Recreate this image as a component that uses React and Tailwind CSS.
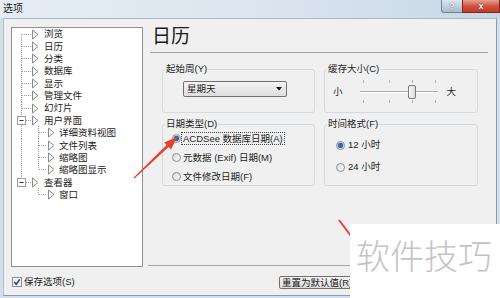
import React from "react"

const tree = [
  { t: "浏览", first: true },
  { t: "日历" },
  { t: "分类" },
  { t: "数据库" },
  { t: "显示" },
  { t: "管理文件" },
  { t: "幻灯片" },
  { t: "用户界面", exp: true },
  { t: "详细资料视图", lvl: 2, root: true },
  { t: "文件列表", lvl: 2, root: true },
  { t: "缩略图", lvl: 2, root: true },
  { t: "缩略图显示", lvl: 2, root: true, last2: true },
  { t: "查看器", exp: true, lastRoot: true },
  { t: "窗口", lvl: 2, last2: true },
]

const dot = { stroke: "#9a9a9a", strokeWidth: 1, strokeDasharray: "1 1" }

const Gutter = ({ item }) => {
  const H = 13
  const m = 6.5
  if (item.lvl === 2) {
    return (
      <svg width="47" height={H} className="block shrink-0">
        {item.root && <line x1="9.5" y1="0" x2="9.5" y2={H} {...dot} />}
        <line x1="26.5" y1="0" x2="26.5" y2={item.last2 ? m : H} {...dot} />
        <line x1="27" y1={m} x2="34" y2={m} {...dot} />
        <polygon points="36.5,2 42,6.5 36.5,11" fill="#f6f6f6" stroke="#8a8a8a" strokeWidth="1" />
      </svg>
    )
  }
  return (
    <svg width="32" height={H} className="block shrink-0">
      {item.exp ? (
        <>
          <line x1="9.5" y1="0" x2="9.5" y2="2.5" {...dot} />
          {!item.lastRoot && <line x1="9.5" y1="10.5" x2="9.5" y2={H} {...dot} />}
          <rect x="5.5" y="2.5" width="8" height="8" fill="#fff" stroke="#9b9b9b" />
          <line x1="7.5" y1={m} x2="11.5" y2={m} stroke="#333" />
          <line x1="14" y1={m} x2="19" y2={m} {...dot} />
        </>
      ) : (
        <>
          <line x1="9.5" y1={item.first ? m : 0} x2="9.5" y2={H} {...dot} />
          <line x1="10" y1={m} x2="19" y2={m} {...dot} />
        </>
      )}
      <polygon points="20.5,2 26,6.5 20.5,11" fill="#f6f6f6" stroke="#8a8a8a" strokeWidth="1" />
    </svg>
  )
}

const Radio = ({ on }) => (
  <svg width="9" height="9" className="block shrink-0">
    <defs>
      <linearGradient id="rg" x1="0" y1="0" x2="1" y2="1">
        <stop offset="0" stopColor="#dcdcdc" />
        <stop offset="1" stopColor="#f8f8f8" />
      </linearGradient>
    </defs>
    <circle cx="4.5" cy="4.5" r="4" fill="url(#rg)" stroke="#8e8e8e" />
    {on && <circle cx="4.5" cy="4.5" r="2.4" fill="#2f6fb0" stroke="#1b4a7e" strokeWidth="0.6" />}
  </svg>
)

const Group = ({ label, className, children }) => (
  <fieldset className={`border border-[#d3dbe1] rounded-[3px] min-w-0 ${className}`}>
    <legend className="ml-[2px] px-[1px] text-[9.5px] leading-[12px]">{label}</legend>
    {children}
  </fieldset>
)

export default function App() {
  return (
    <div className="relative w-[500px] h-[298px] overflow-hidden flex flex-col bg-[#d2deea] text-[#1c1c1c] font-['Liberation_Sans','Noto_Sans_CJK_SC',sans-serif]">
      {/* title bar */}
      <div className="h-[18px] flex items-start justify-between bg-gradient-to-r from-[#e6edf4] via-[#dce6f0] to-[#c8d7e7]">
        <span className="pl-[3px] pt-[3px] text-[10px] leading-[11px]">选项</span>
        <div className="flex">
          <div className="w-[21px] h-[13px] flex items-center justify-center rounded-bl-[3px] border border-t-0 border-r-0 border-[#6f8399] bg-gradient-to-b from-[#dbe5ef] to-[#a8bbd0] text-white text-[9px] font-bold leading-none [text-shadow:0_0_1px_#333]">
            ?
          </div>
          <div className="w-[38px] h-[13px] flex items-center justify-center border border-t-0 border-[#7c2a20] bg-gradient-to-b from-[#e8a196] via-[#cf5140] to-[#c23a27] text-white text-[9px] font-bold leading-none [text-shadow:0_0_1px_#400]">
            x
          </div>
        </div>
      </div>

      {/* body */}
      <div className="flex-1 flex pl-[3px] pr-[3px] pb-[2px]">
        <div className="flex-1 flex flex-col bg-[#f0f0f0] border border-[#8a9bb0] border-l-[#b3c1cf] border-t-[#a9b8c8]">
          <div className="h-[249px] flex">
            {/* tree */}
            <div className="ml-[7px] mt-[8px] w-[132px] h-[240px] bg-white border border-[#8d9299] flex flex-col">
              {tree.map((item) => (
                <div key={item.t} className="h-[12.35px] flex items-center">
                  <Gutter item={item} />
                  <span className="text-[9.5px] leading-none whitespace-nowrap">{item.t}</span>
                </div>
              ))}
            </div>

            {/* right pane */}
            <div className="flex-1 flex flex-col">
              <div className="mt-[8px] pl-[9px] text-[19px] leading-[19px]">日历</div>
              <div className="mt-[6px] ml-[7px] mr-[8px] h-px bg-[#a3a3a3]" />

              <div className="mt-[10px] ml-[19px] grid grid-cols-[153px_154px] gap-x-[9px] gap-y-[5px]">
                <Group label="起始周(Y)" className="h-[50px]">
                  <div className="ml-[20px] mt-[6px] w-[104px] h-[16px] flex items-center justify-between px-[3px] border border-[#707070] rounded-[2px] bg-gradient-to-b from-[#f4f4f4] to-[#dedede]">
                    <span className="text-[9.5px] leading-none">星期天</span>
                    <svg width="6" height="4" className="block mr-[1px]">
                      <polygon points="0,0 6,0 3,3.5" fill="#111" />
                    </svg>
                  </div>
                </Group>

                <Group label="缓存大小(C)" className="h-[50px]">
                  <div className="mt-[5px] h-[24px] flex items-center">
                    <span className="ml-[8px] text-[9.5px] leading-none">小</span>
                    <svg width="82" height="24" className="block ml-[15px]">
                      <defs>
                        <linearGradient id="th" x1="0" y1="0" x2="1" y2="0">
                          <stop offset="0" stopColor="#fbfbfb" />
                          <stop offset="1" stopColor="#d8d8d8" />
                        </linearGradient>
                      </defs>
                      <line x1="2" y1="11.5" x2="80" y2="11.5" stroke="#a9a9a9" />
                      <line x1="2" y1="12.5" x2="80" y2="12.5" stroke="#ffffff" />
                      {[5, 31, 54, 77].map((x) => (
                        <g key={x}>
                          <line x1={x + 0.5} y1="0" x2={x + 0.5} y2="3" stroke="#b5b5b5" />
                          <line x1={x + 0.5} y1="20" x2={x + 0.5} y2="23" stroke="#b5b5b5" />
                        </g>
                      ))}
                      <rect x="50.5" y="5.5" width="7" height="13" rx="1.5" fill="url(#th)" stroke="#7b7b7b" />
                    </svg>
                    <span className="ml-[7px] text-[9.5px] leading-none">大</span>
                  </div>
                </Group>

                <Group label="日期类型(D)" className="h-[68px]">
                  <div className="mt-[-1px] flex flex-col text-[9.5px] leading-none">
                    <div className="h-[19px] flex items-center pl-[9px]">
                      <Radio on />
                      <span className="ml-[1px] px-[1px] py-[1px] outline outline-1 outline-dotted outline-[#444] whitespace-nowrap">
                        ACDSee 数据库日期(A)
                      </span>
                    </div>
                    <div className="h-[19px] flex items-center pl-[9px]">
                      <Radio />
                      <span className="ml-[2px] whitespace-nowrap">元数据 (Exif) 日期(M)</span>
                    </div>
                    <div className="h-[19px] flex items-center pl-[9px]">
                      <Radio />
                      <span className="ml-[2px] whitespace-nowrap">文件修改日期(F)</span>
                    </div>
                  </div>
                </Group>

                <Group label="时间格式(F)" className="h-[68px]">
                  <div className="mt-[4px] flex flex-col text-[9.5px] leading-none">
                    <div className="h-[22px] flex items-center pl-[11px]">
                      <Radio on />
                      <span className="ml-[3px]">12 小时</span>
                    </div>
                    <div className="h-[22px] flex items-center pl-[11px]">
                      <Radio />
                      <span className="ml-[3px]">24 小时</span>
                    </div>
                  </div>
                </Group>
              </div>

              <div className="mt-auto mb-[2px] ml-[5px] h-px bg-[#a3a3a3]" />
            </div>
          </div>

          {/* bottom row */}
          <div className="flex-1 flex items-center">
            <div className="w-[275px] flex items-center">
              <svg width="10" height="10" className="block ml-[8px] shrink-0">
                <rect x="0.5" y="0.5" width="9" height="9" fill="#eef1f6" stroke="#8e8f8f" />
                <path d="M2.2 5 L4.2 7.2 L7.8 2.4" fill="none" stroke="#2a3c78" strokeWidth="1.5" />
              </svg>
              <span className="ml-[2px] text-[9.5px] leading-none">保存选项(S)</span>
            </div>
            <div className="mt-[2px] w-[80px] h-[13px] flex items-center pl-[2px] border border-[#707070] rounded-[2px] bg-gradient-to-b from-[#f4f4f4] to-[#dcdcdc] text-[9.5px] leading-none whitespace-nowrap">
              重置为默认值(R)
            </div>
          </div>
        </div>
      </div>

      {/* annotation arrows */}
      <svg className="absolute inset-0 pointer-events-none" width="500" height="298">
        <polygon
          points="133.6,177.6 134.4,178.4 168.6,147.1 171.1,149.6 177,137 164.2,142.4 166.6,144.9"
          fill="#e8402f"
        />
        <line x1="339" y1="220" x2="354" y2="240" stroke="#e2483a" strokeWidth="2" />
      </svg>

      {/* watermark */}
      <div className="absolute left-[350px] top-[224px] w-[150px] h-[74px] bg-white pl-[6px] pt-[15px] text-[34px] leading-[36px] text-[#c4c4c4] font-light whitespace-nowrap">
        软件技巧
      </div>
    </div>
  )
}
